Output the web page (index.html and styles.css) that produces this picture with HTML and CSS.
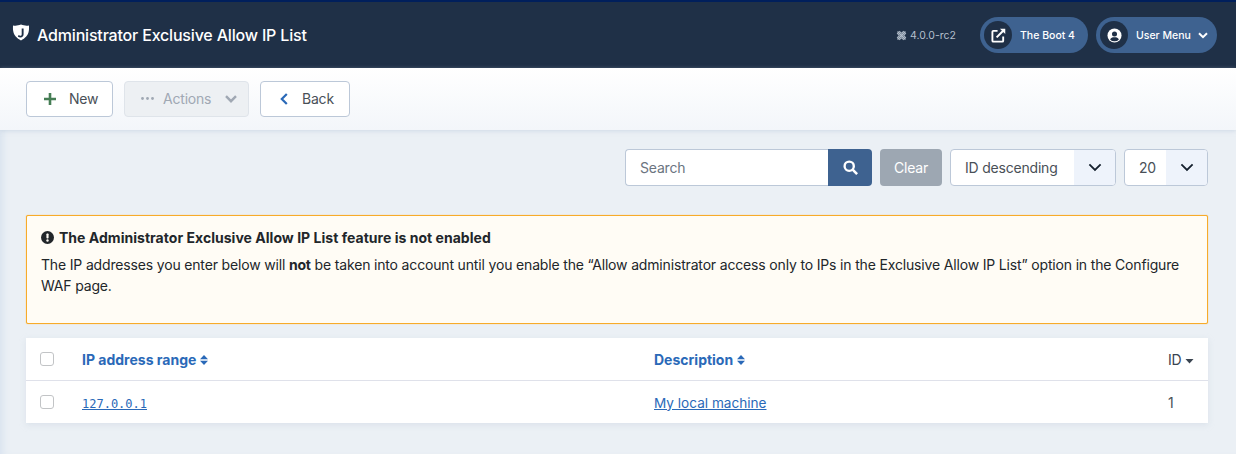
FILE: index.html
```html
<!DOCTYPE html>
<html lang="en">
<head>
<meta charset="utf-8">
<title>Administrator Exclusive Allow IP List</title>
<link rel="stylesheet" href="styles.css">
</head>
<body>
<header class="topbar">
  <div class="brand">
    <svg class="brand-icon" viewBox="0 0 18 18"><path fill="#fff" fill-rule="evenodd" d="M1 1.500C4 2 6 1.600 9 .6c3 1 5 1.400 8 .9 0 1.500.2 3.400-.2 5.600-.6 4-3.600 7.500-7.800 9.300C4.800 14.600 1.800 11.100 1.200 7.100.8 4.900 1 3 1 1.500zM9.700 4.500v5.700c0 1-.6 1.500-1.400 1.500-.6 0-1.100-.2-1.600-.6L5.800 12.500c.8.6 1.600.9 2.600.9 2 0 3.200-1.200 3.200-3.200V4.500H8z"/></svg>
    <h1 class="page-title">Administrator Exclusive Allow IP List</h1>
  </div>
  <div class="top-right">
    <span class="version">
      <svg class="joomla" viewBox="0 0 12 12"><path fill="none" stroke="#b4bfcc" stroke-width="1.800" stroke-linecap="round" d="M2.200 2.200l7.600 7.600M9.800 2.200L2.200 9.800"/><path fill="none" stroke="#b4bfcc" stroke-width="1.100" d="M3.500 1.200L6 3.600l2.500-2.400M3.500 10.800L6 8.400l2.500 2.400M1.200 3.500L3.600 6l-2.400 2.500M10.800 3.500L8.400 6l2.400 2.500"/></svg>
      4.0.0-rc2
    </span>
    <a class="pill pill-site">
      <span class="pill-icon">
        <svg viewBox="0 0 16 16" width="15" height="15"><path fill="none" stroke="#fff" stroke-width="2" d="M7 3H2.500a1 1 0 0 0-1 1v9.500a1 1 0 0 0 1 1H12a1 1 0 0 0 1-1V9"/><path fill="none" stroke="#fff" stroke-width="2.200" d="M6 10l7-7"/><path fill="#fff" d="M9.500 .8H15.200V6.500z"/></svg>
      </span>
      <span class="pill-text">The Boot 4</span>
    </a>
    <a class="pill pill-user">
      <span class="pill-icon">
        <svg viewBox="0 0 16 16" width="15" height="15"><circle cx="8" cy="8" r="7.500" fill="#fff"/><circle cx="8" cy="6.300" r="2.700" fill="#1f3047"/><path fill="#1f3047" d="M3.300 12.200c.7-1.800 2.400-2.400 4.700-2.400s4 .6 4.700 2.400A6 6 0 0 1 8 14.200a6 6 0 0 1-4.700-2z"/></svg>
      </span>
      <span class="pill-text">User Menu</span>
      <svg class="pill-caret" viewBox="0 0 10 7" width="10" height="7"><path fill="none" stroke="#fff" stroke-width="2" d="M1 1.200l4 4 4-4"/></svg>
    </a>
  </div>
</header>

<nav class="toolbar">
  <button class="btn btn-new" type="button">
    <svg class="ico-plus" viewBox="0 0 12 12" width="12" height="12"><path fill="#457d54" d="M4.700 0h2.600v4.700H12v2.600H7.300V12H4.700V7.300H0V4.700h4.700z"/></svg>
    <span class="lbl-new">New</span>
  </button>
  <button class="btn btn-disabled" type="button">
    <svg class="ico-dots" viewBox="0 0 13 3" width="13" height="3"><circle cx="1.500" cy="1.500" r="1.400" fill="#a0a8b3"/><circle cx="6.500" cy="1.500" r="1.400" fill="#a0a8b3"/><circle cx="11.500" cy="1.500" r="1.400" fill="#a0a8b3"/></svg>
    <span class="lbl-actions">Actions</span>
    <svg class="ico-caret" viewBox="0 0 12 8" width="12" height="8"><path fill="none" stroke="#a0a8b3" stroke-width="2.400" d="M1 1.200l5 5 5-5"/></svg>
  </button>
  <button class="btn btn-back" type="button">
    <svg class="ico-back" viewBox="0 0 8 12" width="8" height="12"><path fill="none" stroke="#2a69b8" stroke-width="2.200" d="M6.800 1L1.800 6l5 5"/></svg>
    <span class="lbl-back">Back</span>
  </button>
</nav>

<main class="content">
  <section class="filters">
    <div class="search">
      <input class="search-input" type="text" placeholder="Search">
      <button class="search-btn" type="button" aria-label="Search">
        <svg viewBox="0 0 14 14" width="15" height="15"><circle cx="5.800" cy="5.800" r="4.300" fill="none" stroke="#fff" stroke-width="2.200"/><path stroke="#fff" stroke-width="2.400" d="M9 9l4.200 4.200"/></svg>
      </button>
    </div>
    <button class="clear-btn" type="button">Clear</button>
    <div class="select select-order"><span class="select-value">ID descending</span><span class="select-arrow"><svg viewBox="0 0 12 8" width="14" height="9"><path fill="none" stroke="#15202e" stroke-width="1.600" d="M1 1.200l5 5 5-5"/></svg></span></div>
    <div class="select select-limit"><span class="select-value">20</span><span class="select-arrow"><svg viewBox="0 0 12 8" width="14" height="9"><path fill="none" stroke="#15202e" stroke-width="1.600" d="M1 1.200l5 5 5-5"/></svg></span></div>
  </section>

  <section class="alert">
    <h2 class="alert-title">
      <svg viewBox="0 0 12 12" width="13" height="13"><circle cx="6" cy="6" r="6" fill="#22262a"/><rect x="5" y="2.300" width="2" height="4.700" rx=".7" fill="#fffcf5"/><circle cx="6" cy="8.800" r="1.100" fill="#fffcf5"/></svg>
      The Administrator Exclusive Allow IP List feature is not enabled
    </h2>
    <p class="alert-text">The IP addresses you enter below will <strong>not</strong> be taken into account until you enable the “Allow administrator access only to IPs in the Exclusive Allow IP List” option in the Configure WAF page.</p>
  </section>

  <table class="list">
    <thead>
      <tr>
        <th class="col-check"><span class="check"></span></th>
        <th class="col-ip"><a class="sort">IP address range<svg class="sort-ico" viewBox="0 0 8 10" width="8" height="10"><path fill="#2a69b8" d="M4 0l4 4.300H0zM4 10L0 5.700h8z"/></svg></a></th>
        <th class="col-desc"><a class="sort">Description<svg class="sort-ico" viewBox="0 0 8 10" width="8" height="10"><path fill="#2a69b8" d="M4 0l4 4.300H0zM4 10L0 5.700h8z"/></svg></a></th>
        <th class="col-id">ID <svg class="id-ico" viewBox="0 0 8 5" width="9" height="5"><path fill="#3a4450" d="M0 0h8L4 4.500z"/></svg></th>
      </tr>
    </thead>
    <tbody>
      <tr>
        <td class="col-check"><span class="check"></span></td>
        <td class="col-ip"><a class="ip-link">127.0.0.1</a></td>
        <td class="col-desc"><a class="desc-link">My local machine</a></td>
        <td class="col-id cell-id">1</td>
      </tr>
    </tbody>
  </table>
</main>
</body>
</html>
```

FILE: styles.css
```css
* { box-sizing: border-box; }
html, body { margin: 0; padding: 0; }
body {
  width: 1236px;
  height: 454px;
  overflow: hidden;
  background: #ebf0f5;
  font-family: Inter, "Liberation Sans", sans-serif;
  font-size: 14px;
  letter-spacing: -.2px;
  color: #22262a;
  box-shadow: inset 8px 0 8px -6px #d5e0ee;
}
.topbar {
  height: 68px;
  background: #1f3047;
  border-top: 2px solid #001f5c;
  display: flex;
  align-items: center;
  justify-content: space-between;
  padding: 0 19px 0 12px;
}
.brand { display: flex; align-items: flex-start; }
.brand-icon { width: 18px; height: 18px; margin-top: -1px; }
.page-title {
  margin: 0 0 0 7px;
  color: #fff;
  font-size: 16px;
  font-weight: 500;
  line-height: 20px;
  letter-spacing: -.18px;
}
.top-right { display: flex; align-items: center; font-size: 11px; letter-spacing: 0; }
.version {
  display: flex;
  align-items: center;
  gap: 3px;
  color: #b4bfcc;
  font-size: 10.500px;
  margin-right: 24px;
}
.joomla { width: 11px; height: 11px; }
.pill {
  height: 36px;
  background: #3e6290;
  border-radius: 18px;
  display: flex;
  align-items: center;
  color: #fff;
  padding-left: 4px;
  font-weight: 500;
  font-size: 10.500px;
}
.pill-site { width: 108px; margin-right: 8px; }
.pill-user { width: 121px; }
.pill-icon {
  width: 28px;
  height: 28px;
  border-radius: 50%;
  background: #1f3047;
  display: flex;
  align-items: center;
  justify-content: center;
  margin-right: 8px;
}
.pill-caret { margin-left: 7px; }
.toolbar {
  height: 62px;
  background: linear-gradient(180deg, #fff 0%, #f3f6fa 100%);
  box-shadow: 0 1px 4px rgba(180, 195, 215, .5);
  display: flex;
  align-items: center;
  gap: 11px;
  padding: 1px 0 2px 26px;
}
.btn {
  height: 36px;
  background: #fff;
  border: 1px solid #bcc8d8;
  border-radius: 4px;
  display: flex;
  align-items: center;
  font: 400 14px Inter, "Liberation Sans", sans-serif;
  letter-spacing: -.2px;
  color: #495057;
  padding: 0;
}
.btn-new { width: 87px; padding-left: 17px; }
.btn-back { width: 90px; padding-left: 19px; }
.btn-disabled {
  width: 125px;
  padding-left: 16px;
  background: #edf0f3;
  border-color: #dfe4ea;
  color: #a0a8b3;
}
.lbl-new { margin-left: 13px; }
.lbl-actions { margin-left: 9px; }
.ico-caret { margin-left: 14px; }
.lbl-back { margin-left: 14px; }
.content { padding: 19px 28px 0 26px; }
.filters { display: flex; justify-content: flex-end; height: 37px; }
.search { display: flex; width: 247px; margin-right: 8px; }
.search-input {
  width: 203px;
  height: 37px;
  border: 1px solid #bcc8d8;
  border-right: 0;
  border-radius: 4px 0 0 4px;
  padding: 0 14px;
  font: 400 14px Inter, "Liberation Sans", sans-serif;
  letter-spacing: -.2px;
  background: #fff;
}
.search-input::placeholder { color: #6b7480; opacity: 1; }
.search-btn {
  width: 44px;
  height: 37px;
  border: 0;
  border-radius: 0 4px 4px 0;
  background: #3e6290;
  padding: 0;
  display: flex;
  align-items: center;
  justify-content: center;
}
.clear-btn {
  width: 62px;
  height: 37px;
  border: 0;
  border-radius: 4px;
  background: #9da7b2;
  color: #fff;
  font: 400 14px Inter, "Liberation Sans", sans-serif;
  letter-spacing: -.2px;
  padding: 0;
  margin-right: 8px;
}
.select {
  height: 37px;
  background: #fff;
  border: 1px solid #bcc8d8;
  border-radius: 4px;
  display: flex;
  align-items: center;
  justify-content: space-between;
  overflow: hidden;
  color: #495057;
}
.select-order { width: 166px; margin-right: 8px; }
.select-limit { width: 84px; }
.select-value { padding-left: 14px; }
.select-arrow {
  width: 41px;
  height: 100%;
  background: #eef3fb;
  display: flex;
  align-items: center;
  justify-content: center;
}
.alert {
  margin-top: 29px;
  height: 109px;
  background: #fffcf5;
  border: 1px solid #f7ab2a;
  border-radius: 2px;
  box-shadow: 0 0 1px #f7ab2a;
  padding: 13px 14px 0;
}
.alert-title {
  margin: 0;
  font-size: 14px;
  font-weight: 700;
  line-height: 17px;
  letter-spacing: .03px;
  display: flex;
  align-items: center;
  gap: 5px;
}
.alert-text { margin: 8px 0 0; line-height: 21px; font-size: 14px; letter-spacing: -.165px; }
.alert-text strong { letter-spacing: -.2px; }
.list {
  margin-top: 14px;
  width: 1182px;
  table-layout: fixed;
  background: #fff;
  border-collapse: collapse;
  box-shadow: 0 2px 6px rgba(190, 200, 215, .35);
}
.list th, .list td { padding: 0; text-align: left; }
.list th { padding-top: 2px; }
.list td { padding-top: 1px; }
thead tr { height: 42px; border-bottom: 1px solid #dfe1ea; }
tbody tr { height: 43px; }
.list .col-check { width: 56px; padding-left: 14px; }
.col-ip { width: 572px; }
.col-desc { width: 514px; }
.col-id { width: 40px; font-weight: 400; color: #3a4450; font-size: 14px; }
.cell-id { color: #495057; }
.check {
  display: block;
  width: 14px;
  height: 14px;
  margin: -1px 0 0;
  background: #fff;
  border: 1px solid #c2c4c6;
  border-radius: 3px;
}
.sort { color: #2a69b8; font-weight: 700; font-size: 14px; letter-spacing: 0; }
.sort-ico { margin-left: 4px; vertical-align: 0; }
.id-ico { vertical-align: 1px; }
.ip-link {
  color: #2a69b8;
  text-decoration: underline;
  font-family: "DejaVu Sans Mono", monospace;
  font-size: 12px;
  letter-spacing: 0;
}
.desc-link { color: #2a69b8; text-decoration: underline; font-size: 13.600px; letter-spacing: 0; }
```
